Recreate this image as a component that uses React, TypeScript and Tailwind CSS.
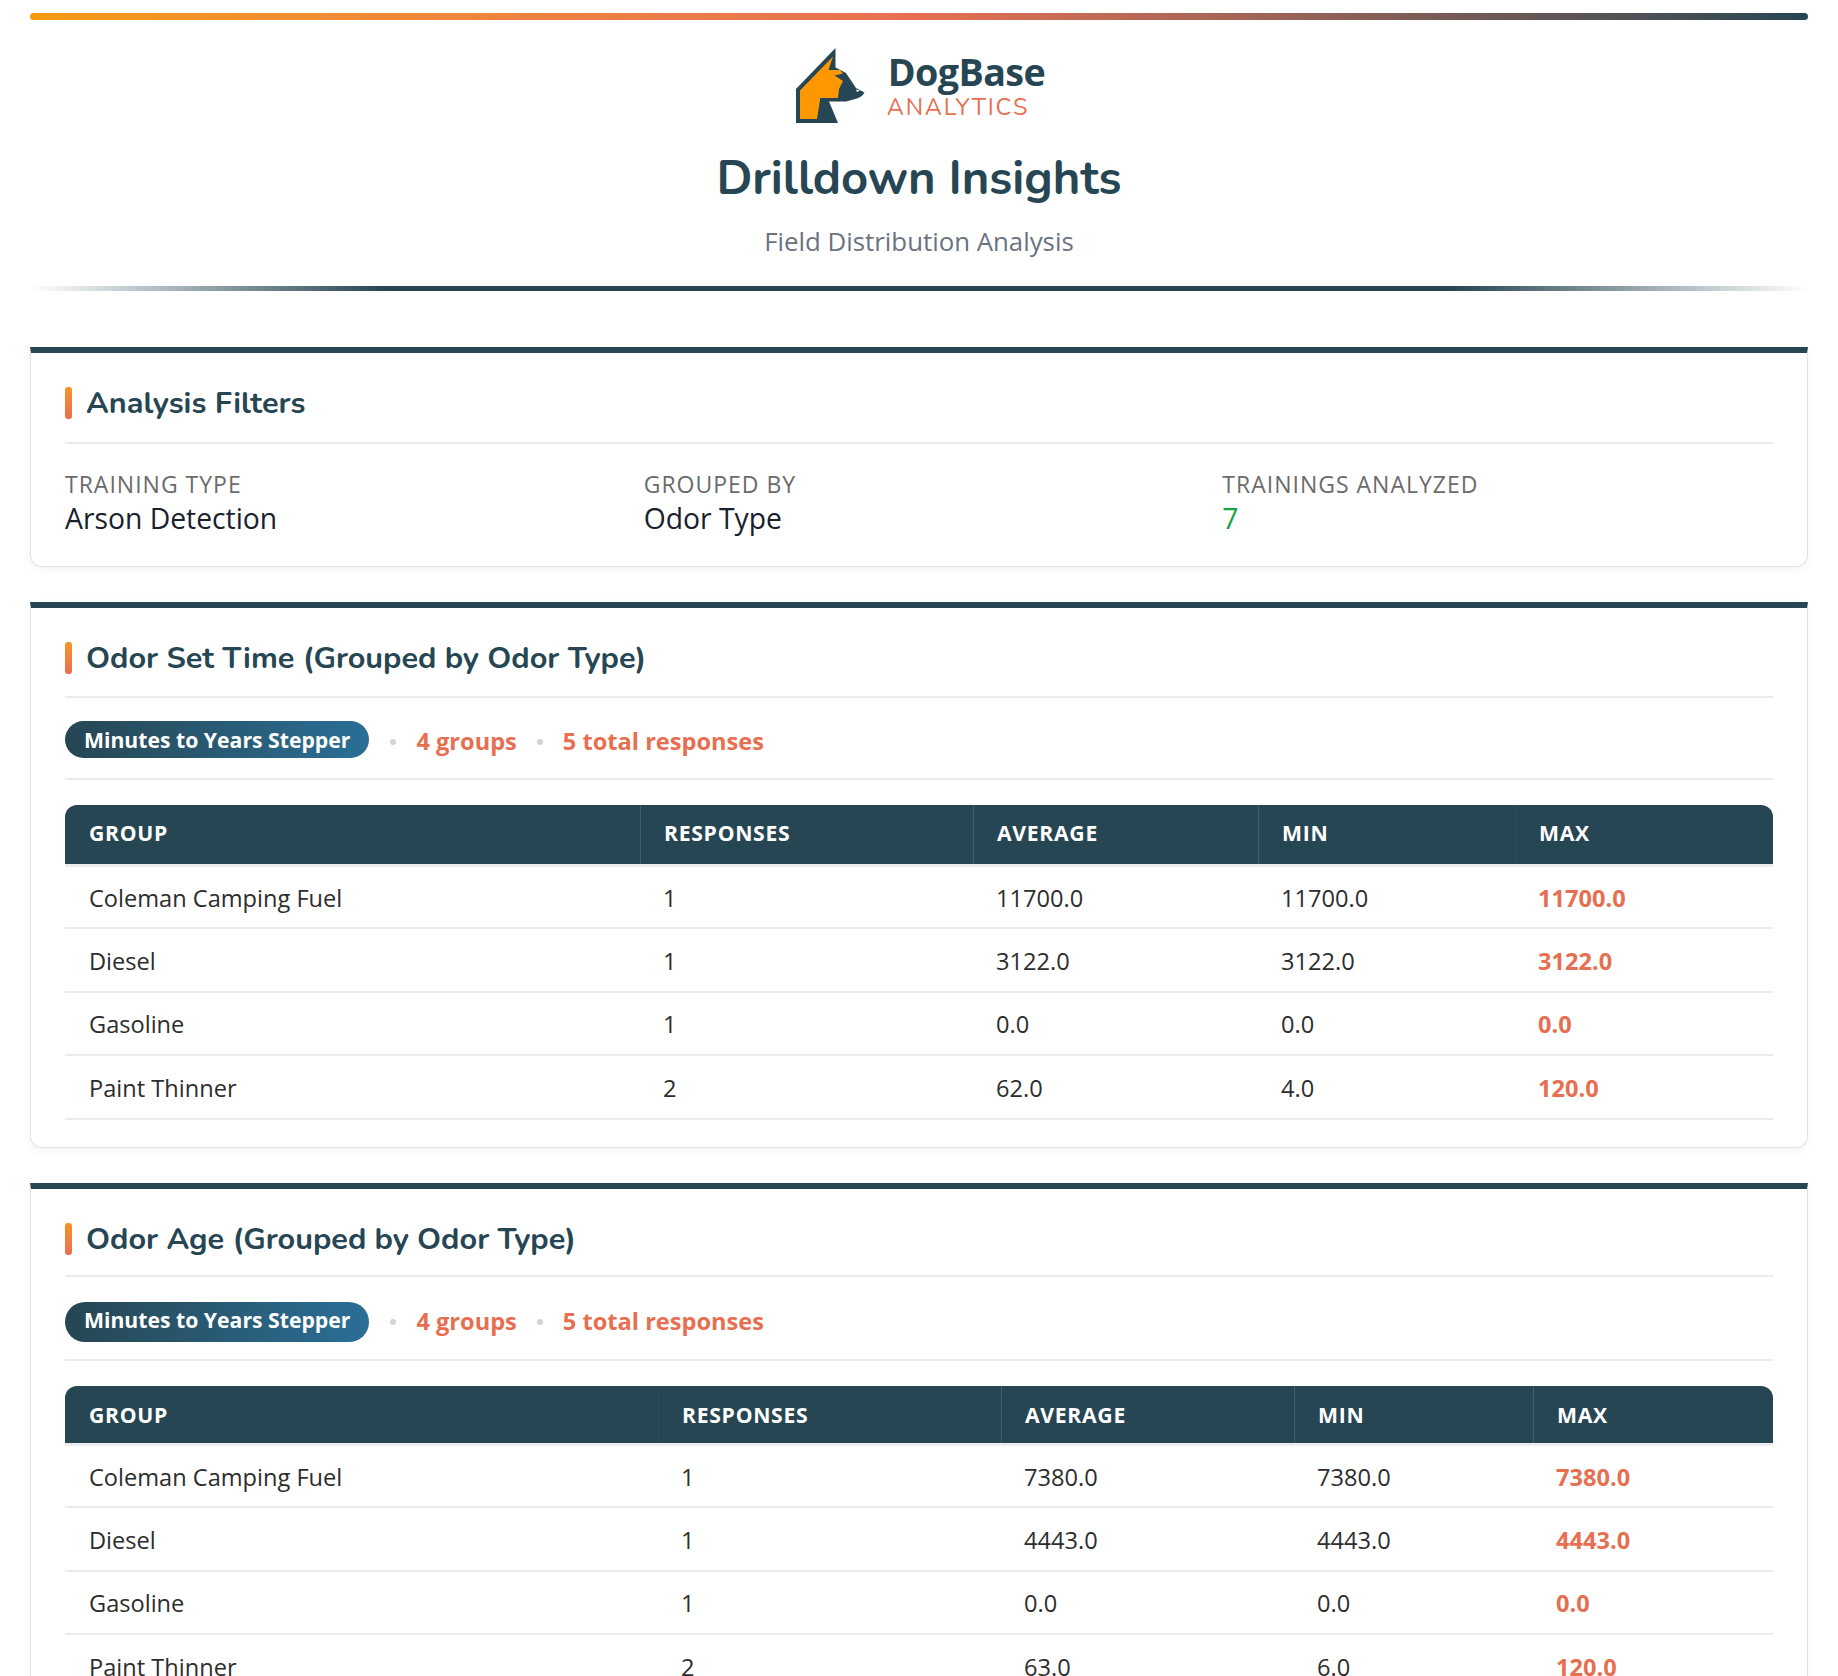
// App.tsx
const sans = "font-['Open_Sans','Noto_Sans',sans-serif]";
const heading = "font-['Nunito','Noto_Sans','Open_Sans',sans-serif]";

interface Row {
  group: string;
  responses: number;
  average: string;
  min: string;
  max: string;
}

const setTimeRows: Row[] = [
  { group: "Coleman Camping Fuel", responses: 1, average: "11700.0", min: "11700.0", max: "11700.0" },
  { group: "Diesel", responses: 1, average: "3122.0", min: "3122.0", max: "3122.0" },
  { group: "Gasoline", responses: 1, average: "0.0", min: "0.0", max: "0.0" },
  { group: "Paint Thinner", responses: 2, average: "62.0", min: "4.0", max: "120.0" },
];

const ageRows: Row[] = [
  { group: "Coleman Camping Fuel", responses: 1, average: "7380.0", min: "7380.0", max: "7380.0" },
  { group: "Diesel", responses: 1, average: "4443.0", min: "4443.0", max: "4443.0" },
  { group: "Gasoline", responses: 1, average: "0.0", min: "0.0", max: "0.0" },
  { group: "Paint Thinner", responses: 2, average: "63.0", min: "6.0", max: "120.0" },
];

function Logo() {
  return (
    <svg viewBox="0 0 72 78" className="w-[72px] h-[78px] shrink-0">
      <path
        fill="#264653"
        d="M0 41 L39.5 0 V19.5 L50 25 L60 40 L68.5 44.5 Q66 49 61 50.5 L50 53.5 H33 L42 75 H0 Z"
      />
      <path
        fill="#ff9800"
        d="M4 42.5 L37 8.5 L32.5 22 H44 L47 25.5 L38.5 27.5 L47 33 L43 41 L42 50 H24 V52 L21 71 H4 Z"
      />
      <path fill="#ffffff" d="M60 41.5 L64 42.5 L61 44 Z" />
    </svg>
  );
}

function CardTitle({ children, pad }: { children: React.ReactNode; pad: string }) {
  return (
    <div className={`flex items-center gap-[14px] border-b-2 border-[#ebebeb] ${pad}`}>
      <span className="w-[7px] h-[32px] rounded-[3px] bg-gradient-to-b from-[#f7931e] to-[#e76f51]" />
      <h2 className={`${heading} text-[30.65px] leading-[32px] font-bold text-[#264653]`}>{children}</h2>
    </div>
  );
}

function Meta({ box, pill }: { box: string; pill: string }) {
  return (
    <div className={`flex items-center border-b-2 border-[#ebebeb] ${box}`}>
      <span
        className={`inline-flex items-center px-[19px] rounded-[20px] bg-gradient-to-r from-[#264653] to-[#2a6f97] text-white font-bold text-[21.2px] ${pill}`}
      >
        Minutes to Years Stepper
      </span>
      <span className="w-[6px] h-[6px] ml-[21px] rounded-full bg-[#d4d4d4]" />
      <span className="ml-[20px] font-bold text-[23.6px] text-[#e76f51]">4 groups</span>
      <span className="w-[6px] h-[6px] ml-[20px] rounded-full bg-[#d4d4d4]" />
      <span className="ml-[20px] font-bold text-[23.6px] text-[#e76f51]">5 total responses</span>
    </div>
  );
}

function DataTable({
  rows,
  widths,
  headH,
  thPad,
  faint,
}: {
  rows: Row[];
  widths: string[];
  headH: string;
  thPad: string;
  faint: number;
}) {
  const heads = ["Group", "Responses", "Average", "Min", "Max"];
  return (
    <table className="w-full table-fixed border-separate border-spacing-0 mt-[25px]">
      <colgroup>
        {widths.map((w, i) => (
          <col key={i} className={w} />
        ))}
      </colgroup>
      <thead>
        <tr className={`${headH} bg-[#264653]`}>
          {heads.map((h, i) => (
            <th
              key={h}
              className={`${i === 0 ? "pl-[24px] pr-[23px]" : "px-[23px]"} text-left uppercase font-bold tracking-[0.7px] text-[21.2px] text-white ${thPad}
                ${i > 0 ? (i === faint ? "border-l border-[#2b4c59]" : "border-l border-[#3f5f6c]") : "rounded-tl-[12px]"} ${i === 4 ? "rounded-tr-[12px]" : ""}`}
            >
              {h}
            </th>
          ))}
        </tr>
      </thead>
      <tbody className="text-[23.6px] text-[#2d2d2d]">
        {rows.map((r, ri) => {
          const cell = `px-[23px] pt-[3px] border-b-2 border-[#ebebeb] ${ri === 0 ? "h-[65px] border-t-[3px] border-t-[#e9edf0]" : "h-[63.6px]"}`;
          return (
            <tr key={r.group}>
              <td className={`${cell} pl-[24px]`}>{r.group}</td>
              <td className={cell}>{r.responses}</td>
              <td className={cell}>{r.average}</td>
              <td className={cell}>{r.min}</td>
              <td className={`${cell} font-bold text-[#e76f51]`}>{r.max}</td>
            </tr>
          );
        })}
      </tbody>
    </table>
  );
}

function Card({ children, className }: { children: React.ReactNode; className?: string }) {
  return (
    <section
      className={`border border-[#dfe3e6] border-t-[6px] border-t-[#264653] rounded-b-[12px] bg-white px-[34px] pt-[34px] shadow-[0_3px_10px_rgba(0,0,0,0.05)] ${className ?? ""}`}
    >
      {children}
    </section>
  );
}

export default function App() {
  return (
    <div className={`${sans} h-[1676px] overflow-hidden bg-white px-[30px] pt-[13px]`}>
      <div className="h-[7px] rounded-full bg-gradient-to-r from-[#f79a0e] via-[#e76f51] to-[#264653]" />

      {/* header */}
      <header className="flex flex-col items-center">
        <div className="flex items-start mt-[28px] ml-[3.4px]">
          <Logo />
          <div className="ml-[19.5px] flex flex-col items-start">
            <span className="text-[37.7px] leading-[38px] mt-[4.7px] font-bold tracking-[-0.6px] text-[#264653]">DogBase</span>
            <span className={`${heading} -ml-[1px] mt-[3px] text-[23.5px] leading-[26px] tracking-[1.8px] text-[#e76f51]`}>ANALYTICS</span>
          </div>
        </div>
        <h1 className={`${heading} mt-[23.3px] text-[47.2px] leading-[60px] font-bold text-[#264653]`}>Drilldown Insights</h1>
        <p className="mt-[15px] text-[25.8px] leading-[34px] text-[#6b7280]">Field Distribution Analysis</p>
      </header>
      <div className="mt-[28px] h-[5px] bg-[linear-gradient(90deg,transparent,#264653_20%,#264653_80%,transparent)]" />

      <div className="mt-[56px] flex flex-col gap-[35px]">
        <Card className="h-[220px]">
          <CardTitle pad="pb-[23px]">Analysis Filters</CardTitle>
          <div className="grid grid-cols-3 gap-[28px] mt-[25px]">
            <div>
              <div className="text-[23px] tracking-[1px] leading-[30px] text-[#6b6b6b]">TRAINING TYPE</div>
              <div className="text-[28.3px] leading-[38px] text-[#1a202c]">Arson Detection</div>
            </div>
            <div>
              <div className="text-[23px] tracking-[1px] leading-[30px] text-[#6b6b6b]">GROUPED BY</div>
              <div className="text-[28.3px] leading-[38px] text-[#1a202c]">Odor Type</div>
            </div>
            <div>
              <div className="text-[23px] tracking-[1px] leading-[30px] text-[#6b6b6b]">TRAININGS ANALYZED</div>
              <div className="text-[28.3px] leading-[38px] text-[#16a34a]">7</div>
            </div>
          </div>
        </Card>

        <Card className="h-[546px]">
          <CardTitle pad="pb-[22px]">Odor Set Time (Grouped by Odor Type)</CardTitle>
          <Meta box="h-[82px] pt-[7px]" pill="h-[37px] -mt-[4px]" />
          <DataTable
            rows={setTimeRows}
            headH="h-[59px]"
            thPad="pb-[3px]"
            faint={4}
            widths={["w-[575px]", "w-[333px]", "w-[285px]", "w-[257px]", "w-auto"]}
          />
        </Card>

        <Card>
          <CardTitle pad="pb-[20px]">Odor Age (Grouped by Odor Type)</CardTitle>
          <Meta box="h-[84px] pt-[7px]" pill="h-[40px] pb-[3px]" />
          <DataTable
            rows={ageRows}
            headH="h-[57px]"
            thPad=""
            faint={1}
            widths={["w-[593px]", "w-[343px]", "w-[293px]", "w-[239px]", "w-auto"]}
          />
        </Card>
      </div>
    </div>
  );
}
